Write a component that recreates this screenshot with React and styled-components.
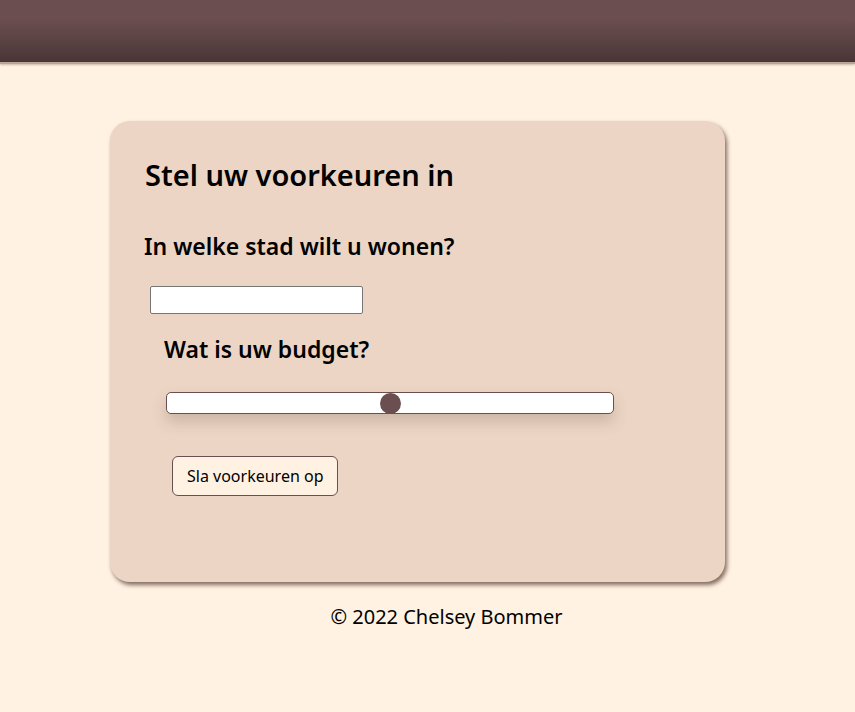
import React from "react";
import styled, { createGlobalStyle } from "styled-components";

const Global = createGlobalStyle`
  body {
    margin: 0;
    background: #fff2e2;
    font-family: "Noto Sans", "DejaVu Sans", sans-serif;
    color: #000;
  }
`;

const App = () => {
  return (
    <>
      <Global />
      <Header />
      <Main>
        <Card>
          <Title>Stel uw voorkeuren in</Title>
          <Question>In welke stad wilt u wonen?</Question>
          <CityInput type="text" />
          <Question indent>Wat is uw budget?</Question>
          <Slider>
            <Thumb style={{ left: "50%" }} />
          </Slider>
          <Button>Sla voorkeuren op</Button>
        </Card>
      </Main>
      <Footer>© 2022 Chelsey Bommer</Footer>
    </>
  );
};

export default App;

const Header = styled.header`
  height: 62px;
  background: linear-gradient(to bottom, #6b4f50 0%, #6b4f50 30%, #4a3536 100%);
  border-bottom: 2px solid #b9a49a;
  box-shadow: 0 1px 2px rgba(80, 50, 40, 0.3);
`;

const Main = styled.main`
  padding: 57px 0 0 110px;
`;

const Card = styled.section`
  width: 615px;
  height: 461px;
  box-sizing: border-box;
  background: #ecd5c4;
  border-radius: 20px;
  box-shadow: 2px 3px 4px rgba(90, 60, 55, 0.75);
  padding: 35px 34px;
  display: flex;
  flex-direction: column;
  align-items: flex-start;
`;

const Title = styled.h1`
  margin: 0 0 0 1px;
  font-size: 29px;
  font-weight: 600;
  line-height: 1.3;
`;

const Question = styled.h2`
  margin: ${(p) => (p.indent ? "21px 0 0 20px" : "38px 0 0 0")};
  font-size: 23px;
  font-weight: 600;
  line-height: 1.3;
`;

const CityInput = styled.input`
  margin: 24px 0 0 6px;
  width: 213px;
  height: 28px;
  box-sizing: border-box;
  border: 1px solid #767676;
  border-radius: 2px;
  background: #fff;
`;

const Slider = styled.div`
  position: relative;
  margin: 28px 0 0 22px;
  width: 448px;
  height: 22px;
  box-sizing: border-box;
  background: #fff;
  border: 1px solid #6b4f50;
  border-radius: 5px;
  box-shadow: 0 8px 14px rgba(120, 90, 70, 0.25);
`;

const Thumb = styled.span`
  position: absolute;
  top: -0.5px;
  width: 21px;
  height: 21px;
  margin-left: -10px;
  border-radius: 50%;
  background: #6b4f50;
`;

const Button = styled.button`
  margin: 42px 0 0 28px;
  height: 40px;
  padding: 0 14px;
  background: #fff2e2;
  border: 1px solid #6b4f50;
  border-radius: 6px;
  font-family: inherit;
  font-size: 16px;
  color: #000;
`;

const Footer = styled.footer`
  margin-top: 21px;
  padding-left: 38px;
  text-align: center;
  font-size: 20px;
`;
